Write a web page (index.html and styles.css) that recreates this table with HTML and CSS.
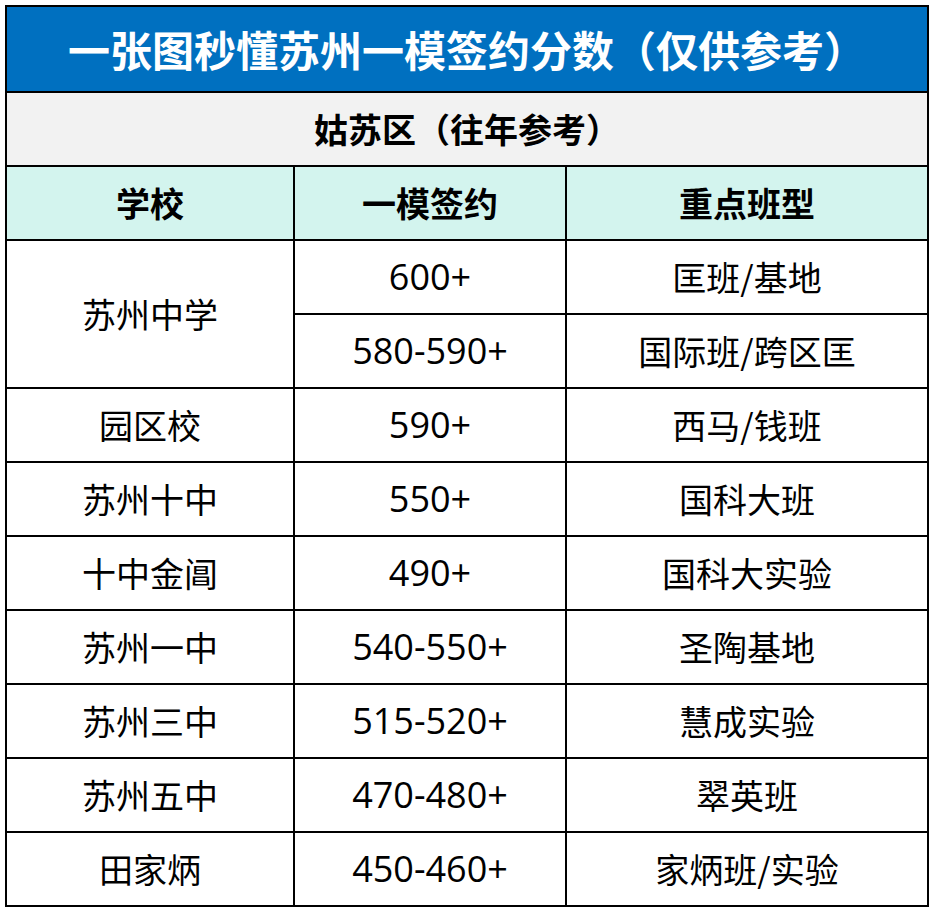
FILE: index.html
```html
<!DOCTYPE html>
<html lang="zh">
<head>
<meta charset="utf-8">
<title>一张图秒懂苏州一模签约分数</title>
<link rel="stylesheet" href="styles.css">
</head>
<body>
<table class="score-table">
  <colgroup>
    <col class="c1"><col class="c2"><col class="c3">
  </colgroup>
  <tr class="title-row"><td colspan="3">一张图秒懂苏州一模签约分数（仅供参考）</td></tr>
  <tr class="sub-row"><td colspan="3">姑苏区（往年参考）</td></tr>
  <tr class="head-row"><td>学校</td><td>一模签约</td><td>重点班型</td></tr>
  <tr><td rowspan="2">苏州中学</td><td class="num">600+</td><td>匡班/基地</td></tr>
  <tr><td class="num">580-590+</td><td>国际班/跨区匡</td></tr>
  <tr><td>园区校</td><td class="num">590+</td><td>西马/钱班</td></tr>
  <tr><td>苏州十中</td><td class="num">550+</td><td>国科大班</td></tr>
  <tr><td>十中金阊</td><td class="num">490+</td><td>国科大实验</td></tr>
  <tr><td>苏州一中</td><td class="num">540-550+</td><td>圣陶基地</td></tr>
  <tr><td>苏州三中</td><td class="num">515-520+</td><td>慧成实验</td></tr>
  <tr><td>苏州五中</td><td class="num">470-480+</td><td>翠英班</td></tr>
  <tr><td>田家炳</td><td class="num">450-460+</td><td>家炳班/实验</td></tr>
</table>
</body>
</html>
```
FILE: styles.css
```css
html, body {
  margin: 0;
  padding: 0;
  background: #ffffff;
}
body {
  padding: 5px 0 0 5px;
  font-family: "Noto Sans CJK SC", "Noto Sans", sans-serif;
  color: #000;
}
.score-table {
  border-collapse: collapse;
  width: 922px;
  table-layout: fixed;
  border: 2px solid #000;
}
.c1 { width: 288px; }
.c2 { width: 272px; }
.c3 { width: 362px; }
.score-table td {
  border: 2px solid #000;
  text-align: center;
  vertical-align: middle;
  height: 72px;
  padding: 0;
  font-size: 34px;
  line-height: 1;
}
.score-table td.num {
  font-family: "Open Sans", "Noto Sans CJK SC", sans-serif;
  font-size: 36px;
}
.score-table .title-row td {
  background: #0070c0;
  color: #ffffff;
  font-weight: 700;
  font-size: 42px;
  height: 84px;
}
.score-table .sub-row td {
  background: #f2f2f2;
  font-weight: 700;
  font-size: 34px;
}
.score-table .head-row td {
  background: #d3f4ee;
  font-weight: 700;
  font-size: 34px;
}
```
